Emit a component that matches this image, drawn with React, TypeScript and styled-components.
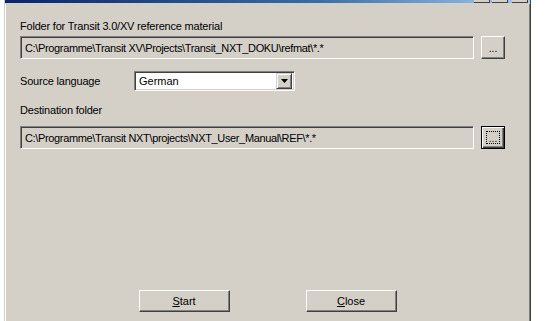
import React from 'react';
import styled, {createGlobalStyle} from "styled-components";

const GlobalStyle = createGlobalStyle`
    html, body {
      margin: 0;
      padding: 0;
      background: #FFFFFF;
      width: 547px;
      height: 321px;
      overflow: hidden;
    }
    * {
      box-sizing: border-box;
    }
`

const Screen = styled.div`
    display: flex;
    height: 321px;
    padding-left: 4px;
    background: #FFFFFF;
    font-family: "Liberation Sans", Arial, sans-serif;
    font-size: 11px;
    color: #000000;
`

const Window = styled.div`
    width: 527px;
    height: 100%;
    display: flex;
    flex-direction: column;
    background: #D4D0C8;
    border-left: 1px solid #D4D0C8;
    border-right: 1px solid #404040;
    box-shadow: inset 1px 0 #FFFFFF, inset -1px 0 #808080;
`

const TitleBar = styled.div`
    height: 4px;
    display: flex;
    justify-content: flex-end;
    align-items: flex-end;
    padding-right: 2px;
    gap: 2px;
    background: linear-gradient(to right, #0A246A, #3A6EA5 60%, #A6CAF0);
    border-bottom: 1px solid #D4D0C8;
    overflow: hidden;
`

const CaptionButton = styled.div<{ $spaced?: boolean }>`
    width: 16px;
    height: 3px;
    margin-left: ${p => p.$spaced ? '2px' : '0'};
    background: #D4D0C8;
    border-bottom: 1px solid #404040;
    border-right: 1px solid #404040;
`

const Body = styled.div`
    flex: 1;
    display: flex;
    flex-direction: column;
    padding: 16px 0 9px 15px;
`

const Label = styled.div<{ $top?: number }>`
    height: 13px;
    line-height: 13px;
    letter-spacing: -0.2px;
    margin-top: ${p => p.$top || 0}px;
`

const FieldRow = styled.div<{ $top: number }>`
    display: flex;
    align-items: center;
    gap: 7px;
    margin-top: ${p => p.$top}px;
`

const PathField = styled.div`
    width: 454px;
    height: 23px;
    padding: 0 4px;
    display: flex;
    align-items: center;
    white-space: nowrap;
    overflow: hidden;
    letter-spacing: -0.35px;
    background: #D4D0C8;
    border: 1px solid;
    border-color: #808080 #FFFFFF #FFFFFF #808080;
    box-shadow: inset 1px 1px #404040, inset -1px -1px #D4D0C8;
`

const Button = styled.button<{ $focused?: boolean; $w: number; $h: number }>`
    width: ${p => p.$w}px;
    height: ${p => p.$h}px;
    padding: 0;
    display: flex;
    align-items: center;
    justify-content: center;
    background: #D4D0C8;
    font-family: inherit;
    font-size: 11px;
    color: #000000;
    border: 1px solid;
    border-color: ${p => p.$focused ? '#000000' : '#FFFFFF #404040 #404040 #FFFFFF'};
    box-shadow: ${p => p.$focused
        ? 'inset 1px 1px #FFFFFF, inset -1px -1px #404040, inset -2px -2px #808080'
        : 'inset -1px -1px #808080'};
    position: relative;
`

const FocusRing = styled.span`
    position: absolute;
    inset: 4px;
    border: 1px dotted #000000;
`

const Dots = styled.span`
    font-size: 10px;
    line-height: 1;
    margin-top: 2px;
`

const LanguageRow = styled.div`
    display: flex;
    align-items: center;
    margin-top: 12px;
`

const LanguageLabel = styled.div`
    width: 114px;
    letter-spacing: -0.2px;
`

const Combo = styled.div`
    width: 161px;
    height: 20px;
    display: flex;
    align-items: center;
    padding: 0 2px 0 4px;
    background: #FFFFFF;
    border: 1px solid;
    border-color: #808080 #FFFFFF #FFFFFF #808080;
    box-shadow: inset 1px 1px #404040, inset -1px -1px #D4D0C8;
`

const ComboText = styled.span`
    flex: 1;
`

const ComboArrow = styled.div`
    width: 16px;
    height: 16px;
    display: flex;
    align-items: center;
    justify-content: center;
    background: #D4D0C8;
    border: 1px solid;
    border-color: #D4D0C8 #404040 #404040 #D4D0C8;
    box-shadow: inset 1px 1px #FFFFFF, inset -1px -1px #808080;
`

const Footer = styled.div`
    margin-top: auto;
    display: flex;
    justify-content: center;
    gap: 76px;
    padding-right: 15px;
`

const Key = styled.span`
    text-decoration: underline;
`

const App = () => {
    return (
        <Screen>
            <GlobalStyle/>
            <Window>
                <TitleBar>
                    <CaptionButton/>
                    <CaptionButton/>
                    <CaptionButton $spaced/>
                </TitleBar>
                <Body>
                    <Label>Folder for Transit 3.0/XV reference material</Label>
                    <FieldRow $top={3}>
                        <PathField>C:\Programme\Transit XV\Projects\Transit_NXT_DOKU\refmat\*.*</PathField>
                        <Button $w={24} $h={23}><Dots>...</Dots></Button>
                    </FieldRow>
                    <LanguageRow>
                        <LanguageLabel>Source language</LanguageLabel>
                        <Combo>
                            <ComboText>German</ComboText>
                            <ComboArrow>
                                <svg width="7" height="4" viewBox="0 0 7 4">
                                    <path d="M0 0h7L3.5 4z" fill="#000000"/>
                                </svg>
                            </ComboArrow>
                        </Combo>
                    </LanguageRow>
                    <Label $top={13}>Destination folder</Label>
                    <FieldRow $top={9}>
                        <PathField>C:\Programme\Transit NXT\projects\NXT_User_Manual\REF\*.*</PathField>
                        <Button $w={24} $h={23} $focused><FocusRing/><Dots>...</Dots></Button>
                    </FieldRow>
                    <Footer>
                        <Button $w={91} $h={22}><span><Key>S</Key>tart</span></Button>
                        <Button $w={91} $h={22}><span><Key>C</Key>lose</span></Button>
                    </Footer>
                </Body>
            </Window>
        </Screen>
    );
};

export default App;
